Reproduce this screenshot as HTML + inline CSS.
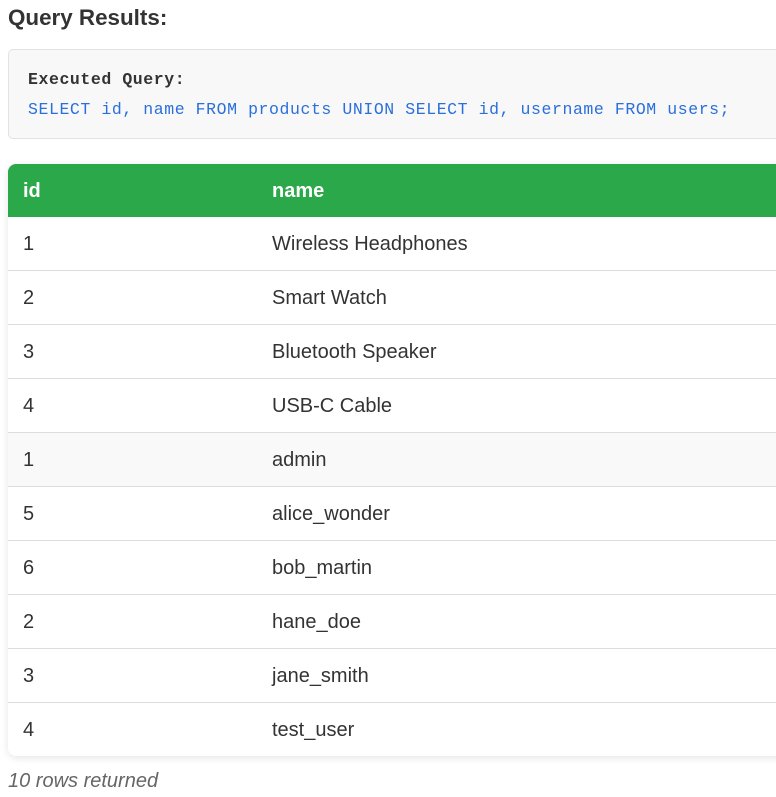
<!DOCTYPE html>
<html>
<head>
<meta charset="utf-8">
<style>
html,body{margin:0;padding:0;background:#fff;width:776px;height:797px;overflow:hidden}
body{position:relative;font-family:"Liberation Sans",Arial,sans-serif;color:#333}
h3{position:absolute;left:8px;top:6px;margin:0;font-size:22.4px;line-height:24px;font-weight:700;color:#333;white-space:nowrap}
.q{position:absolute;left:8px;top:49px;width:800px;height:90px;box-sizing:border-box;background:#f8f8f8;border:1px solid #e2e2e2;border-radius:5px}
.m{position:absolute;left:19px;font-family:"Liberation Mono","Courier New",monospace;font-size:16.5px;letter-spacing:.578px;line-height:20px;white-space:pre}
.m.a{top:20px;font-weight:700;color:#333}
.m.b{top:50px;color:#2a6fdb}
.t{position:absolute;left:8px;top:164px;width:800px;height:592px;background:#fff;border-radius:8px;box-shadow:0 2px 8px rgba(0,0,0,.1);overflow:hidden}
.h{height:53px;background:#2ba84a;color:#fff;font-weight:700;position:relative}
.r{height:53px;border-bottom:1px solid #ddd;position:relative}
.r.l{border-bottom:0}
.r.g{background:#f9f9f9}
.c1,.c2{position:absolute;top:1px;line-height:53px;font-size:20px;white-space:nowrap}
.c1{left:15px}.c2{left:264px}
.f{position:absolute;left:8px;top:770px;font-size:20px;line-height:22px;font-style:italic;color:#666;white-space:nowrap}
</style>
</head>
<body>
<h3>Query Results:</h3>
<div class="q">
<div class="m a">Executed Query:</div>
<div class="m b">SELECT id, name FROM products UNION SELECT id, username FROM users;</div>
</div>
<div class="t">
<div class="h"><span class="c1">id</span><span class="c2">name</span></div>
<div class="r"><span class="c1">1</span><span class="c2">Wireless Headphones</span></div>
<div class="r"><span class="c1">2</span><span class="c2">Smart Watch</span></div>
<div class="r"><span class="c1">3</span><span class="c2">Bluetooth Speaker</span></div>
<div class="r"><span class="c1">4</span><span class="c2">USB-C Cable</span></div>
<div class="r g"><span class="c1">1</span><span class="c2">admin</span></div>
<div class="r"><span class="c1">5</span><span class="c2">alice_wonder</span></div>
<div class="r"><span class="c1">6</span><span class="c2">bob_martin</span></div>
<div class="r"><span class="c1">2</span><span class="c2">hane_doe</span></div>
<div class="r"><span class="c1">3</span><span class="c2">jane_smith</span></div>
<div class="r l"><span class="c1">4</span><span class="c2">test_user</span></div>
</div>
<div class="f">10 rows returned</div>
</body>
</html>
